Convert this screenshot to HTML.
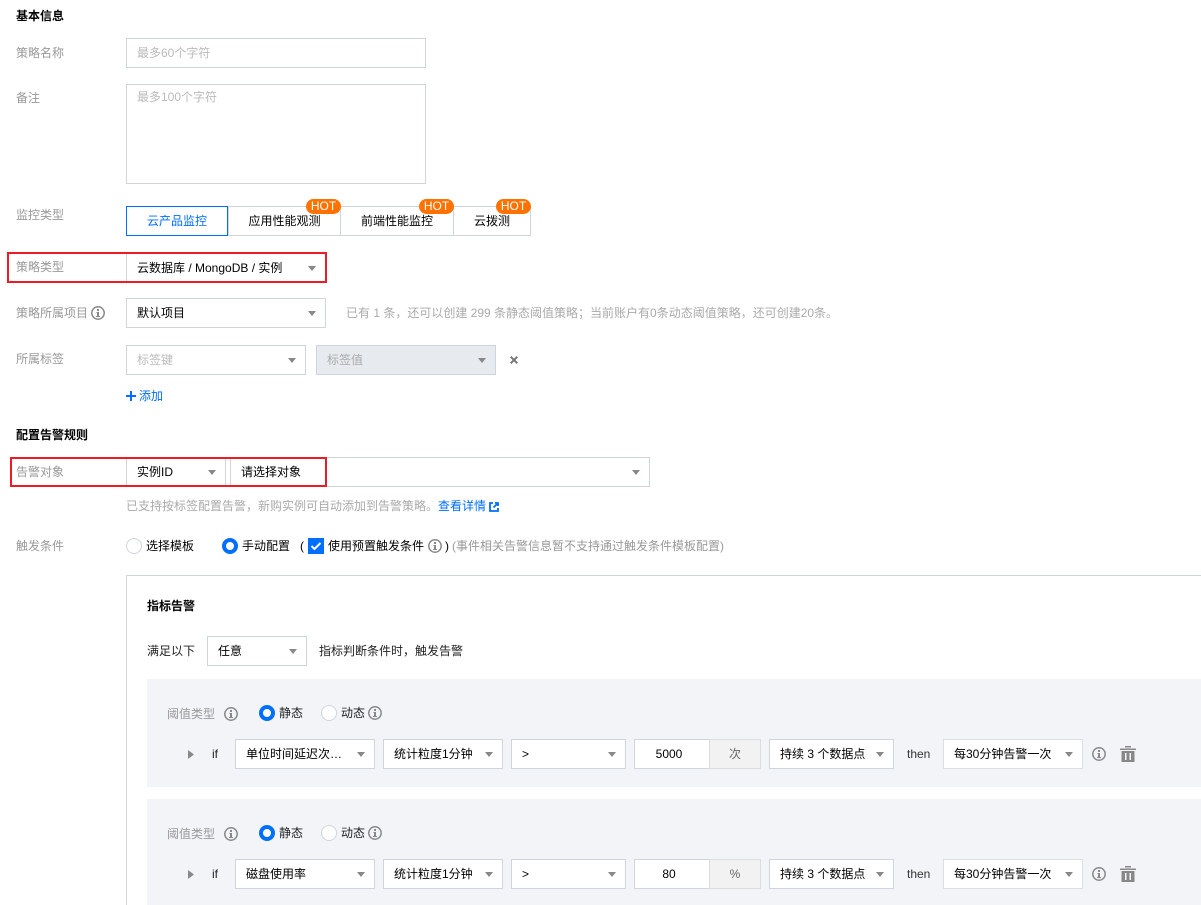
<!DOCTYPE html>
<html lang="zh"><head><meta charset="utf-8"><style>
html,body{margin:0;padding:0;background:#fff}
#p{position:relative;width:1201px;height:905px;overflow:hidden;font:12px/20px "Liberation Sans","Noto Sans CJK SC",sans-serif;color:#000}
#p div,#p span.a,#p svg{position:absolute;box-sizing:border-box}
.t{white-space:nowrap;height:20px}
.l{color:#999;left:16px}
.h{font-weight:700;left:16px;color:#000;font-size:12px}
.b{border:1px solid #cfd5de;background:#fff}
.s{height:30px;border:1px solid #cfd5de;background:#fff;line-height:28px;padding-left:10px;white-space:nowrap;color:#000}
.s:after{content:"";position:absolute;right:9px;top:12px;border:4px solid transparent;border-top:5px solid #888;border-bottom:0}
.ph{color:#bbb}
.hot{top:199px;height:15px;background:#ff7200;color:#fff;border-radius:8px;font-size:12px;line-height:15px;text-align:center}
.tab{top:206px;height:30px;border:1px solid #cfd5de;background:#fff;text-align:center;line-height:28px}
.red{border:2px solid #ed1c24}
.g{left:147px;width:1054px;background:#f2f4f8}
</style></head><body><div id="p">
<div class="t h" style="top:6px">基本信息</div>
<div class="t l" style="top:43px">策略名称</div>
<div class="b" style="left:126px;top:38px;width:300px;height:30px"></div>
<div class="t ph" style="left:137px;top:43px">最多60个字符</div>
<div class="t l" style="top:88px">备注</div>
<div class="b" style="left:126px;top:84px;width:300px;height:100px"></div>
<div class="t ph" style="left:137px;top:87px">最多100个字符</div>

<div class="t l" style="top:205px">监控类型</div>
<div class="tab" style="left:228px;width:113px">应用性能观测</div>
<div class="tab" style="left:340px;width:114px">前端性能监控</div>
<div class="tab" style="left:453px;width:78px">云拨测</div>
<div class="tab" style="left:126px;width:102px;border-color:#006eff;color:#006eff">云产品监控</div>
<div class="hot" style="left:306px;width:35px">HOT</div>
<div class="hot" style="left:419px;width:35px">HOT</div>
<div class="hot" style="left:496px;width:35px">HOT</div>

<div class="t l" style="top:257px">策略类型</div>
<div class="s" style="left:126px;top:253px;width:200px">云数据库 / MongoDB / 实例</div>
<div class="red" style="left:7px;top:252px;width:320px;height:31px"></div>

<div class="t l" style="top:303px">策略所属项目</div>
<svg style="left:91px;top:306px" width="14" height="14" viewBox="0 0 14 14"><circle cx="7" cy="7" r="6.200" fill="none" stroke="#888" stroke-width="1.500"/><path d="M6 3h2v2H6zM5.500 6H8v4h1v1H5v-1h1V7h-.5z" fill="#888"/></svg>
<div class="s" style="left:126px;top:298px;width:200px">默认项目</div>
<div class="t" style="left:346px;top:303px;color:#aaa">已有 1 条，还可以创建 299 条静态阈值策略；当前账户有0条动态阈值策略，还可创建20条。</div>

<div class="t l" style="top:349px">所属标签</div>
<div class="s ph" style="left:126px;top:345px;width:180px;color:#bbb">标签键</div>
<div class="s ph" style="left:316px;top:345px;width:180px;background:#e7eaef;color:#aaa">标签值</div>
<svg style="left:510px;top:356px" width="8" height="8" viewBox="0 0 8 8"><path d="M.7.7l6.600 6.600M7.300.7L.7 7.300" stroke="#777" stroke-width="2"/></svg>
<svg style="left:126px;top:391px" width="10" height="10" viewBox="0 0 10 10"><path d="M4 0h2v4h4v2H6v4H4V6H0V4h4z" fill="#006eff"/></svg>
<div class="t" style="left:139px;top:386px;color:#006eff">添加</div>

<div class="t h" style="top:425px">配置告警规则</div>
<div class="t l" style="top:462px">告警对象</div>
<div class="s" style="left:126px;top:457px;width:100px">实例ID</div>
<div class="s" style="left:230px;top:457px;width:420px">请选择对象</div>
<div class="red" style="left:10px;top:457px;width:317px;height:30px"></div>
<div class="t" style="left:126px;top:496px;color:#aaa">已支持按标签配置告警，新购实例可自动添加到告警策略。</div>
<div class="t" style="left:438px;top:496px;color:#006eff">查看详情</div>
<svg style="left:489px;top:502px" width="10" height="10" viewBox="0 0 10 10"><path d="M4 1H1v8h8V6M6 1h3v3M9 1L4.500 5.500" fill="none" stroke="#006eff" stroke-width="1.800"/></svg>

<div class="t l" style="top:536px">触发条件</div>
<svg style="left:126px;top:538px" width="16" height="16"><circle cx="8" cy="8" r="7.500" fill="#fff" stroke="#cfd5de"/></svg>
<div class="t" style="left:146px;top:536px">选择模板</div>
<svg style="left:222px;top:538px" width="16" height="16"><circle cx="8" cy="8" r="6" fill="#fff" stroke="#006eff" stroke-width="4"/></svg>
<div class="t" style="left:242px;top:536px">手动配置</div>
<div class="t" style="left:300px;top:536px">(</div>
<svg style="left:308px;top:538px" width="16" height="16"><rect width="16" height="16" fill="#006eff"/><path d="M3.500 8l3 3 6-6" fill="none" stroke="#fff" stroke-width="2"/></svg>
<div class="t" style="left:328px;top:536px">使用预置触发条件</div>
<svg style="left:428px;top:539px" width="14" height="14" viewBox="0 0 14 14"><circle cx="7" cy="7" r="6.200" fill="none" stroke="#888" stroke-width="1.500"/><path d="M6 3h2v2H6zM5.500 6H8v4h1v1H5v-1h1V7h-.5z" fill="#888"/></svg>
<div class="t" style="left:445px;top:536px">)</div>
<div class="t" style="left:452px;top:536px;color:#999">(事件相关告警信息暂不支持通过触发条件模板配置)</div>

<div class="b" style="left:126px;top:575px;width:1100px;height:340px"></div>
<div class="t" style="left:147px;top:596px;font-weight:700">指标告警</div>
<div class="t" style="left:147px;top:641px;color:#222">满足以下</div>
<div class="s" style="left:207px;top:636px;width:100px">任意</div>
<div class="t" style="left:319px;top:641px;color:#222">指标判断条件时，触发告警</div>

<div class="g" style="top:679px;height:108px"></div>
<div class="t" style="left:167px;top:704px;color:#999">阈值类型</div>
<svg style="left:224px;top:707px" width="14" height="14" viewBox="0 0 14 14"><circle cx="7" cy="7" r="6.200" fill="none" stroke="#888" stroke-width="1.500"/><path d="M6 3h2v2H6zM5.500 6H8v4h1v1H5v-1h1V7h-.5z" fill="#888"/></svg>
<svg style="left:259px;top:705px" width="16" height="16"><circle cx="8" cy="8" r="6" fill="#fff" stroke="#006eff" stroke-width="4"/></svg>
<div class="t" style="left:279px;top:703px;color:#222">静态</div>
<svg style="left:321px;top:705px" width="16" height="16"><circle cx="8" cy="8" r="7.500" fill="#fff" stroke="#cfd5de"/></svg>
<div class="t" style="left:341px;top:703px;color:#222">动态</div>
<svg style="left:368px;top:706px" width="14" height="14" viewBox="0 0 14 14"><circle cx="7" cy="7" r="6.200" fill="none" stroke="#888" stroke-width="1.500"/><path d="M6 3h2v2H6zM5.500 6H8v4h1v1H5v-1h1V7h-.5z" fill="#888"/></svg>
<svg style="left:188px;top:750px" width="6" height="9"><path d="M0 0l6 4.500L0 9z" fill="#888"/></svg>
<div class="t" style="left:212px;top:744px;color:#222">if</div>
<div class="s" style="left:235px;top:739px;width:140px">单位时间延迟次…</div>
<div class="s" style="left:383px;top:739px;width:120px">统计粒度1分钟</div>
<div class="s" style="left:511px;top:739px;width:115px">&gt;</div>
<div class="b" style="left:634px;top:739px;width:76px;height:30px;text-align:center;line-height:28px;padding-right:6px">5000</div>
<div style="left:709px;top:739px;width:52px;height:30px;border:1px solid #dcdcdc;background:#f2f2f2;text-align:center;line-height:28px;color:#666">次</div>
<div class="s" style="left:769px;top:739px;width:125px">持续 3 个数据点</div>
<div class="t" style="left:907px;top:744px;color:#333">then</div>
<div class="s" style="left:943px;top:739px;width:140px;border-color:#dcdfe4">每30分钟告警一次</div>
<svg style="left:1092px;top:747px" width="14" height="14" viewBox="0 0 14 14"><circle cx="7" cy="7" r="6.200" fill="none" stroke="#888" stroke-width="1.500"/><path d="M6 3h2v2H6zM5.500 6H8v4h1v1H5v-1h1V7h-.5z" fill="#888"/></svg>
<svg style="left:1120px;top:746px" width="16" height="16" viewBox="0 0 16 16"><path d="M5 0h6v1.500H5zM0 2.500h16V4H0zM1.500 5h13v11h-13zM5 7v7h1.500V7zM9.500 7v7H11V7z" fill="#888" fill-rule="evenodd"/></svg>

<div class="g" style="top:799px;height:106px"></div>
<div class="t" style="left:167px;top:824px;color:#999">阈值类型</div>
<svg style="left:224px;top:827px" width="14" height="14" viewBox="0 0 14 14"><circle cx="7" cy="7" r="6.200" fill="none" stroke="#888" stroke-width="1.500"/><path d="M6 3h2v2H6zM5.500 6H8v4h1v1H5v-1h1V7h-.5z" fill="#888"/></svg>
<svg style="left:259px;top:825px" width="16" height="16"><circle cx="8" cy="8" r="6" fill="#fff" stroke="#006eff" stroke-width="4"/></svg>
<div class="t" style="left:279px;top:823px;color:#222">静态</div>
<svg style="left:321px;top:825px" width="16" height="16"><circle cx="8" cy="8" r="7.500" fill="#fff" stroke="#cfd5de"/></svg>
<div class="t" style="left:341px;top:823px;color:#222">动态</div>
<svg style="left:368px;top:826px" width="14" height="14" viewBox="0 0 14 14"><circle cx="7" cy="7" r="6.200" fill="none" stroke="#888" stroke-width="1.500"/><path d="M6 3h2v2H6zM5.500 6H8v4h1v1H5v-1h1V7h-.5z" fill="#888"/></svg>
<svg style="left:188px;top:870px" width="6" height="9"><path d="M0 0l6 4.500L0 9z" fill="#888"/></svg>
<div class="t" style="left:212px;top:864px;color:#222">if</div>
<div class="s" style="left:235px;top:859px;width:140px">磁盘使用率</div>
<div class="s" style="left:383px;top:859px;width:120px">统计粒度1分钟</div>
<div class="s" style="left:511px;top:859px;width:115px">&gt;</div>
<div class="b" style="left:634px;top:859px;width:76px;height:30px;text-align:center;line-height:28px;padding-right:6px">80</div>
<div style="left:709px;top:859px;width:52px;height:30px;border:1px solid #dcdcdc;background:#f2f2f2;text-align:center;line-height:28px;color:#666">%</div>
<div class="s" style="left:769px;top:859px;width:125px">持续 3 个数据点</div>
<div class="t" style="left:907px;top:864px;color:#333">then</div>
<div class="s" style="left:943px;top:859px;width:140px;border-color:#dcdfe4">每30分钟告警一次</div>
<svg style="left:1092px;top:867px" width="14" height="14" viewBox="0 0 14 14"><circle cx="7" cy="7" r="6.200" fill="none" stroke="#888" stroke-width="1.500"/><path d="M6 3h2v2H6zM5.500 6H8v4h1v1H5v-1h1V7h-.5z" fill="#888"/></svg>
<svg style="left:1120px;top:866px" width="16" height="16" viewBox="0 0 16 16"><path d="M5 0h6v1.500H5zM0 2.500h16V4H0zM1.500 5h13v11h-13zM5 7v7h1.500V7zM9.500 7v7H11V7z" fill="#888" fill-rule="evenodd"/></svg>
</div></body></html>
